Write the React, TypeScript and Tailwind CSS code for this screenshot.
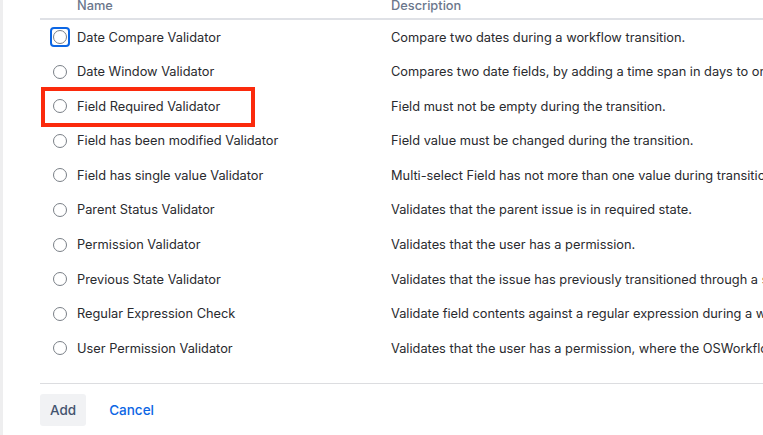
const validators = [
  ["Date Compare Validator", "Compare two dates during a workflow transition."],
  ["Date Window Validator", "Compares two date fields, by adding a time span in days to one of the dates."],
  ["Field Required Validator", "Field must not be empty during the transition."],
  ["Field has been modified Validator", "Field value must be changed during the transition."],
  ["Field has single value Validator", "Multi-select Field has not more than one value during transition."],
  ["Parent Status Validator", "Validates that the parent issue is in required state."],
  ["Permission Validator", "Validates that the user has a permission."],
  ["Previous State Validator", "Validates that the issue has previously transitioned through a specific state."],
  ["Regular Expression Check", "Validate field contents against a regular expression during a workflow transition."],
  ["User Permission Validator", "Validates that the user has a permission, where the OSWorkflow variable holds the username."],
];

function Radio({ focused }: { focused?: boolean }) {
  return (
    <span
      className={
        "flex h-[20px] w-[20px] shrink-0 items-center justify-center rounded-[4px] border-2 " +
        (focused ? "border-[#0c66e4]" : "border-transparent")
      }
    >
      <span className="h-[14px] w-[14px] rounded-full border border-[#7a7f87] bg-white" />
    </span>
  );
}

export default function App() {
  return (
    <div
      className="relative h-[435px] w-[763px] overflow-hidden bg-white"
      style={{ fontFamily: "Inter, 'Noto Sans', sans-serif" }}
    >
      <div className="flex h-full border-l-[3px] border-[#eeeeef]">
        <div className="ml-[37px] flex flex-1 flex-col">
          <div className="-mt-[4px] grid h-[24px] grid-cols-[351px_1fr] items-start border-b-2 border-[#dfe1e6] text-[12.8px] font-medium text-[#6b778c]">
            <div className="pl-[37px] leading-[20px]">Name</div>
            <div className="leading-[20px]">Description</div>
          </div>
          <div className="flex flex-col">
            {validators.map(([name, desc], i) => (
              <div
                key={name}
                className="grid h-[34.56px] grid-cols-[351px_1fr] items-center text-[12.8px] text-[#292a2e]"
              >
                <div className="flex items-center gap-[7px] pl-[10px]">
                  <Radio focused={i === 0} />
                  <span className="whitespace-nowrap">{name}</span>
                </div>
                <div className="overflow-hidden whitespace-nowrap">{desc}</div>
              </div>
            ))}
          </div>
          <div className="mt-[18px] border-t border-[#dcdde0]" />
          <div className="mt-[10px] flex items-center gap-[23px]">
            <button className="h-[32px] rounded-[3px] bg-[#f1f2f4] px-[10px] text-[13.5px] font-medium text-[#44546f]">
              Add
            </button>
            <button className="text-[13.5px] font-medium text-[#0c66e4]">Cancel</button>
          </div>
        </div>
      </div>
      <div className="absolute left-[41px] top-[87px] h-[40px] w-[214px] border-4 border-[#fb2a0c]" />
    </div>
  );
}
